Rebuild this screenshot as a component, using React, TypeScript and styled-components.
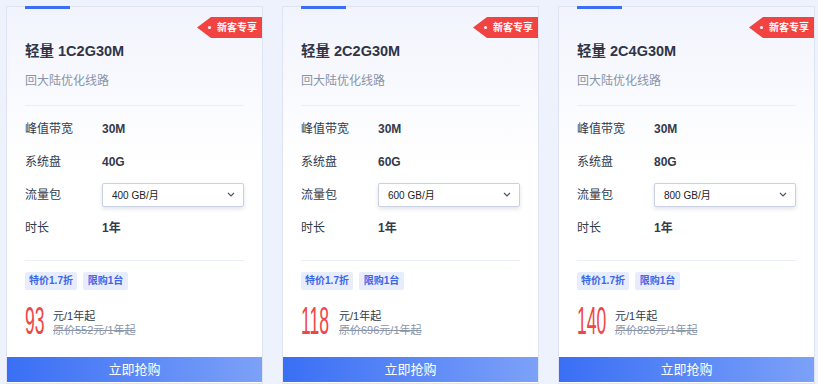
import styled, { createGlobalStyle } from "styled-components";

const GlobalStyle = createGlobalStyle`
  html, body {
    margin: 0;
    padding: 0;
    background: #edf2fc;
    font-family: "Liberation Sans", "Noto Sans CJK SC", sans-serif;
  }
`;

const Page = styled.div`
  display: flex;
  gap: 19px;
  padding: 6px 0 0 6px;
  height: 384px;
  box-sizing: border-box;
  overflow: hidden;
`;

const Card = styled.div`
  position: relative;
  width: 257px;
  height: 378px;
  box-sizing: border-box;
  border: 1px solid #dde5f4;
  background: linear-gradient(180deg, #f2f4fd 0%, #ffffff 42%);
  display: flex;
  flex-direction: column;
`;

const TopBar = styled.div`
  position: absolute;
  top: -1px;
  left: 18px;
  width: 45px;
  height: 3px;
  background: #3a6ff5;
`;

const Ribbon = styled.div`
  position: absolute;
  top: 10px;
  right: 0;
  width: 65px;
  height: 21px;
  background: #f24343;
  clip-path: polygon(0 50%, 14px 0, 100% 0, 100% 100%, 14px 100%);
  display: flex;
  align-items: center;
  color: #fff;
  font-size: 10px;
  font-weight: 700;
  line-height: 21px;
  &::before {
    content: "";
    width: 3px;
    height: 3px;
    border-radius: 50%;
    background: #fff;
    margin: 0 6px 0 11px;
  }
`;

const Body = styled.div`
  padding: 34px 18px 0;
  flex: 1;
`;

const Title = styled.div`
  font-size: 14.5px;
  font-weight: 700;
  color: #2f3547;
  line-height: 20px;
`;

const Sub = styled.div`
  margin-top: 12px;
  font-size: 12px;
  color: #8a94a8;
  line-height: 16px;
`;

const Divider = styled.div<{ $gap: number }>`
  height: 1px;
  background: #e9eef8;
  margin: 16px 0 ${(p) => p.$gap}px;
`;

const Row = styled.div`
  display: flex;
  align-items: center;
  height: 33px;
  font-size: 12px;
  color: #333a4a;
`;

const Label = styled.div`
  width: 77px;
  line-height: 16px;
`;

const Value = styled.div`
  font-weight: 700;
  line-height: 16px;
`;

const Select = styled.div`
  width: 142px;
  height: 24px;
  box-sizing: border-box;
  border: 1px solid #c9d1e2;
  border-radius: 2px;
  box-shadow: 0 2px 4px rgba(40, 60, 100, 0.14);
  background: #fff;
  display: flex;
  align-items: center;
  justify-content: space-between;
  padding: 0 8px 0 9px;
  font-size: 10px;
  color: #222;
`;

const Tags = styled.div`
  display: flex;
  gap: 6px;
`;

const Tag = styled.div<{ $w: number }>`
  width: ${(p) => p.$w}px;
  height: 18px;
  border-radius: 2px;
  background: #e7edfd;
  color: #3b66e8;
  font-size: 10px;
  font-weight: 700;
  line-height: 18px;
  text-align: center;
`;

const PriceRow = styled.div`
  display: flex;
  align-items: center;
  margin-top: 15px;
  height: 32px;
`;

const Digits = styled.div<{ $n: number }>`
  width: ${(p) => p.$n * 10}px;
  margin-right: 8px;
  height: 32px;
  white-space: nowrap;
  & > span {
    display: inline-block;
    font-family: "Liberation Sans", sans-serif;
    font-size: 39px;
    line-height: 32px;
    color: #f04646;
    transform: scaleX(0.45);
    transform-origin: left center;
  }
`;

const PriceText = styled.div`
  display: flex;
  flex-direction: column;
  margin-top: 3px;
  font-size: 11px;
  line-height: 14px;
  color: #333a4a;
`;

const Orig = styled.span`
  color: #8a94a8;
  text-decoration: line-through;
`;

const Buy = styled.div`
  height: 25px;
  margin-bottom: 1px;
  background: linear-gradient(90deg, #3a6ff5 0%, #7ca1f8 100%);
  color: #fff;
  font-size: 13px;
  line-height: 25px;
  text-align: center;
`;

const Chevron = () => (
  <svg width="8" height="5" viewBox="0 0 8 5">
    <path d="M1 1l3 3 3-3" fill="none" stroke="#555" strokeWidth="1.2" />
  </svg>
);

const plans = [
  { name: "轻量 1C2G30M", disk: "40G", flow: "400 GB/月", price: "93", orig: "552" },
  { name: "轻量 2C2G30M", disk: "60G", flow: "600 GB/月", price: "118", orig: "696" },
  { name: "轻量 2C4G30M", disk: "80G", flow: "800 GB/月", price: "140", orig: "828" },
];

export default function App() {
  return (
    <>
      <GlobalStyle />
      <Page>
        {plans.map((p) => (
          <Card key={p.name}>
            <TopBar />
            <Ribbon>新客专享</Ribbon>
            <Body>
              <Title>{p.name}</Title>
              <Sub>回大陆优化线路</Sub>
              <Divider $gap={6} />
              <Row>
                <Label>峰值带宽</Label>
                <Value>30M</Value>
              </Row>
              <Row>
                <Label>系统盘</Label>
                <Value>{p.disk}</Value>
              </Row>
              <Row>
                <Label>流量包</Label>
                <Select>
                  {p.flow}
                  <Chevron />
                </Select>
              </Row>
              <Row>
                <Label>时长</Label>
                <Value>1年</Value>
              </Row>
              <Divider $gap={11} />
              <Tags>
                <Tag $w={52}>特价1.7折</Tag>
                <Tag $w={45}>限购1台</Tag>
              </Tags>
              <PriceRow>
                <Digits $n={p.price.length}>
                  <span>{p.price}</span>
                </Digits>
                <PriceText>
                  <span>元/1年起</span>
                  <Orig>原价{p.orig}元/1年起</Orig>
                </PriceText>
              </PriceRow>
            </Body>
            <Buy>立即抢购</Buy>
          </Card>
        ))}
      </Page>
    </>
  );
}
